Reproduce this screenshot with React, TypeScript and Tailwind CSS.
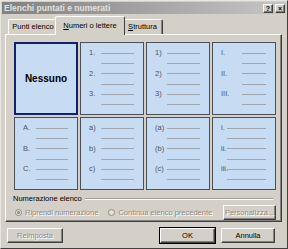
import React from "react";

type Cell = {labels: string[]; label: string};

// label column widths are written out so Tailwind can see them
const rows: Cell[][] = [
  [
    {labels: [], label: ""},
    {labels: ["1.", "2.", "3."], label: "w-[12px]"},
    {labels: ["1)", "2)", "3)"], label: "w-[12px]"},
    {labels: ["I.", "II.", "III."], label: "w-[21px]"},
  ],
  [
    {labels: ["A.", "B.", "C."], label: "w-[13px]"},
    {labels: ["a)", "b)", "c)"], label: "w-[12px]"},
    {labels: ["(a)", "(b)", "(c)"], label: "w-[12px]"},
    {labels: ["i.", "ii.", "iii."], label: "w-[6px]"},
  ],
];

const raised =
  "border border-t-white border-l-white border-r-[#404040] border-b-[#404040] shadow-[inset_-1px_-1px_0_#808080]";
const disabledText = "text-[#8d8a84] [text-shadow:1px_1px_0_#ffffff]";

function ListCell({cell, selected}: {cell: Cell; selected?: boolean}) {
  if (selected) {
    return (
      <div className="h-[73px] bg-[#c7dbf3] border-2 border-[#13206b] flex items-center justify-center">
        <span className="text-[10px] font-bold text-black">Nessuno</span>
      </div>
    );
  }
  return (
    <div className="h-[73px] bg-[#c7dbf3] border border-[#4b4f57] pt-[5px] pl-[8px] pr-[9px]">
      {cell.labels.map((l) => (
        <div key={l} className="h-[20.6px]">
          <div className="flex items-center h-[10px]">
            <span className={`${cell.label} shrink-0 text-[7.5px] leading-none text-[#50545b]`}>{l}</span>
            <div className="flex-1 h-px bg-[#9fa6b0]" />
          </div>
          <div className="flex mt-[5px]">
            <span className={`${cell.label} shrink-0`} />
            <div className="flex-1 h-px bg-[#9fa6b0]" />
          </div>
        </div>
      ))}
    </div>
  );
}

function Btn({children, disabled, main}: {children: React.ReactNode; disabled?: boolean; main?: boolean}) {
  return (
    <div
      className={`h-[15px] flex items-center justify-center bg-[#d4d0c8] text-[7.5px] ${
        main ? "outline outline-1 outline-black" : ""
      } ${raised} ${disabled ? disabledText : "text-black"}`}
    >
      {children}
    </div>
  );
}

function Radio({checked, text}: {checked?: boolean; text: string}) {
  return (
    <div className="flex items-center gap-[3px]">
      <div className="w-[7px] h-[7px] rounded-full border border-[#8d8a84] bg-[#e6e3dd] flex items-center justify-center">
        {checked && <div className="w-[3px] h-[3px] rounded-full bg-[#8d8a84]" />}
      </div>
      <span className={`text-[7.5px] ${disabledText}`}>{text}</span>
    </div>
  );
}

export default function App() {
  return (
    <div className="w-[288px] h-[249px] bg-[#d4d0c8] font-['Liberation_Sans',Arial,sans-serif] border border-t-[#e8e6e1] border-l-[#e8e6e1] border-r-[#404040] border-b-[#404040] p-px overflow-hidden">
      {/* title bar */}
      <div className="h-[12px] flex items-center pl-[2px] pr-px bg-gradient-to-r from-[#828282] to-[#c6c6c6]">
        <span className="flex-1 text-[8.5px] font-bold text-[#e2e0dc] leading-none">Elenchi puntati e numerati</span>
        <div className={`w-[10px] h-[9px] bg-[#d4d0c8] ${raised} flex items-center justify-center text-[7px] font-bold leading-none`}>?</div>
        <div className={`ml-[2px] w-[10px] h-[9px] bg-[#d4d0c8] ${raised} flex items-center justify-center text-[7px] font-bold leading-none`}>×</div>
      </div>

      {/* tabs */}
      <div className="mt-[2px] pl-[6px] flex items-end h-[18px] text-[7.5px] text-black">
        <div className="h-[15px] w-[49px] flex items-center justify-center border-t border-l border-white rounded-tl-[2px]">
          Punti elenco
        </div>
        <div className="relative z-10 -mx-[2px] -mb-px h-[19px] w-[70px] bg-[#d4d0c8] flex items-center justify-center border-t border-l border-r border-t-white border-l-white border-r-[#404040] rounded-t-[2px]">
          <span>
            <span className="underline">N</span>umeri o lettere
          </span>
        </div>
        <div className="h-[15px] w-[40px] flex items-center justify-center border-t border-r border-t-white border-r-[#404040] shadow-[inset_-1px_0_0_#808080] rounded-tr-[2px]">
          <span>
            <span className="underline">S</span>truttura
          </span>
        </div>
      </div>

      {/* panel */}
      <div className="ml-[3px] mr-[4px] h-[188px] border border-t-white border-l-white border-r-[#404040] border-b-[#404040] shadow-[inset_-1px_-1px_0_#808080] pt-[7px] pl-[8px] pr-[5px]">
        <div className="w-[262px] flex flex-col gap-[2px]">
          {rows.map((r, i) => (
            <div key={i} className="grid grid-cols-4 gap-[2px]">
              {r.map((c, j) => (
                <ListCell key={j} cell={c} selected={i === 0 && j === 0} />
              ))}
            </div>
          ))}
        </div>

        <div className="mt-[3px] flex items-center w-[260px] -ml-px">
          <span className="text-[7.5px] text-black">Numerazione elenco</span>
          <div className="flex-1 ml-[3px] h-[2px] border-t border-t-[#a09c94] border-b border-b-white" />
        </div>

        <div className="mt-[1px] flex items-center w-[262px]">
          <div className="flex items-center gap-[10px] pl-px">
            <Radio checked text="Riprendi numerazione" />
            <Radio text="Continua elenco precedente" />
          </div>
          <div className="ml-auto w-[53px]">
            <Btn disabled>Personalizza...</Btn>
          </div>
        </div>
      </div>

      {/* bottom buttons */}
      <div className="mt-[6px] flex items-center pl-[5px] pr-[11px]">
        <div className="w-[56px]">
          <Btn disabled>Reimposta</Btn>
        </div>
        <div className="ml-auto w-[55px]">
          <Btn main>OK</Btn>
        </div>
        <div className="ml-[6px] w-[54px]">
          <Btn>Annulla</Btn>
        </div>
      </div>
    </div>
  );
}
